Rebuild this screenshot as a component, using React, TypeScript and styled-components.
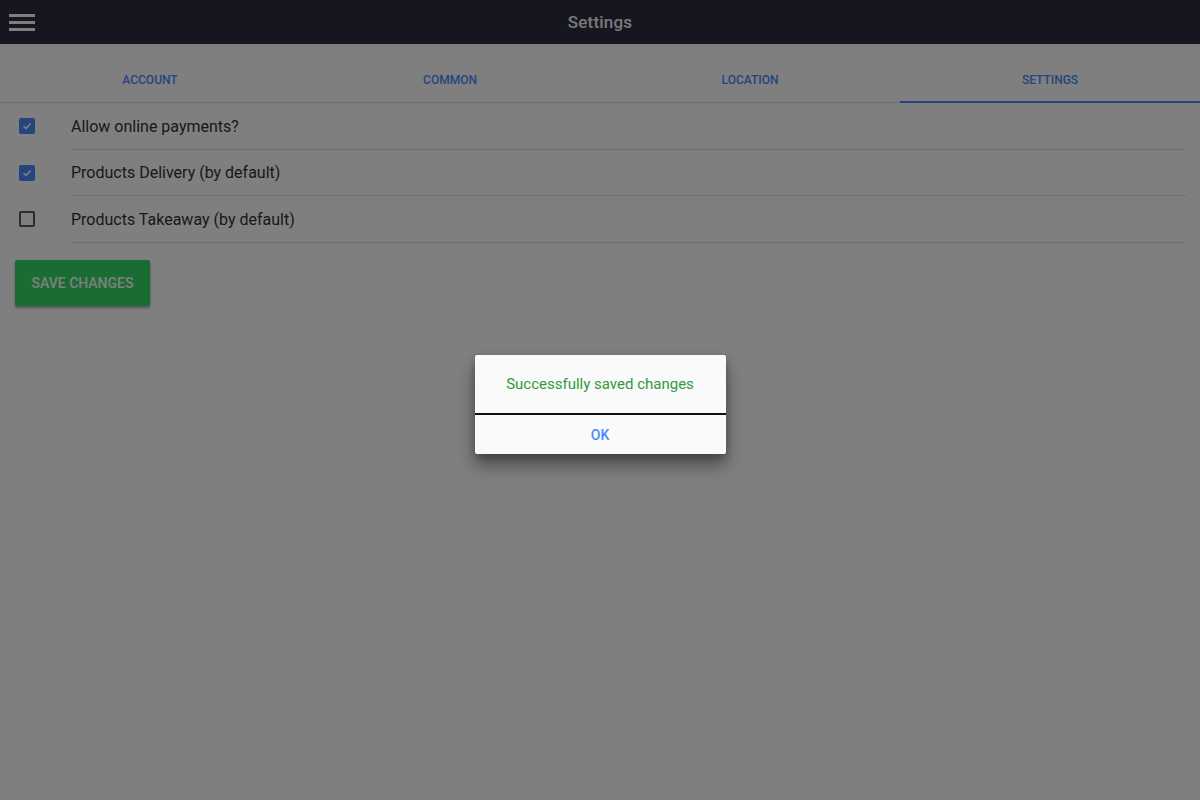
import React, { useState } from "react";
import styled, { createGlobalStyle } from "styled-components";

const Global = createGlobalStyle`
  html, body { margin: 0; padding: 0; width: 100%; height: 100%; }
  body { font-family: Roboto, "Noto Sans", "Liberation Sans", sans-serif; background: #ffffff; }
  #root { width: 100%; height: 100%; }
  * { box-sizing: border-box; }
`;

const Page = styled.div`
  position: relative;
  width: 1200px;
  height: 800px;
  overflow: hidden;
  background: #ffffff;
  display: flex;
  flex-direction: column;
`;

const Header = styled.header`
  height: 44px;
  background: #2a2c3e;
  display: grid;
  grid-template-columns: 60px 1fr 60px;
  align-items: center;
`;

const MenuButton = styled.button`
  border: 0;
  background: transparent;
  padding: 0 0 0 9px;
  height: 44px;
  display: flex;
  flex-direction: column;
  justify-content: center;
  gap: 4px;
  cursor: pointer;
`;

const MenuLine = styled.span`
  display: block;
  width: 26px;
  height: 3px;
  background: #ffffff;
`;

const Title = styled.h1`
  margin: 0;
  text-align: center;
  color: #f2f2f2;
  font-size: 17px;
  font-weight: 500;
  letter-spacing: 0.2px;
`;

const Tabs = styled.nav`
  display: grid;
  grid-template-columns: repeat(4, 1fr);
  height: 59px;
  border-bottom: 1px solid #dcdcdc;
`;

const Tab = styled.div<{ $active?: boolean }>`
  display: flex;
  align-items: flex-end;
  justify-content: center;
  padding-bottom: 14px;
  font-size: 12px;
  font-weight: 500;
  color: #488aff;
  text-transform: uppercase;
  border-bottom: 2px solid ${(p) => (p.$active ? "#488aff" : "transparent")};
  margin-bottom: -1px;
`;

const List = styled.div`
  display: flex;
  flex-direction: column;
`;

const Row = styled.label`
  display: grid;
  grid-template-columns: 71px 1fr;
  align-items: stretch;
  height: 46.5px;
  padding-right: 14px;
  cursor: pointer;
`;

const BoxCell = styled.div`
  display: flex;
  align-items: center;
  padding-left: 19px;
`;

const Box = styled.span<{ $checked: boolean }>`
  width: 16px;
  height: 16px;
  border-radius: 2px;
  border: 2px solid ${(p) => (p.$checked ? "#488aff" : "#5a5a5a")};
  background: ${(p) => (p.$checked ? "#488aff" : "transparent")};
  display: flex;
  align-items: center;
  justify-content: center;
`;

const RowText = styled.div`
  display: flex;
  align-items: center;
  border-bottom: 1px solid #dedede;
  font-size: 16px;
  color: #333333;
  padding-top: 1px;
`;

const SaveButton = styled.button`
  margin: 17px 0 0 15px;
  width: 135px;
  height: 46px;
  border: 0;
  border-radius: 2px;
  background: #32db64;
  color: #ffffff;
  font-family: Roboto, "Noto Sans", "Liberation Sans", sans-serif;
  font-size: 14px;
  font-weight: 500;
  text-transform: uppercase;
  box-shadow: 0 2px 3px rgba(0, 0, 0, 0.35);
  align-self: flex-start;
  cursor: pointer;
`;

const Backdrop = styled.div`
  position: absolute;
  inset: 0;
  background: rgba(0, 0, 0, 0.5);
  display: flex;
  align-items: flex-start;
  justify-content: center;
  padding-top: 355px;
`;

const Dialog = styled.div`
  width: 251px;
  background: #fafafa;
  border-radius: 2px;
  box-shadow: 0 12px 18px rgba(0, 0, 0, 0.35), 0 4px 8px rgba(0, 0, 0, 0.25);
  display: flex;
  flex-direction: column;
`;

const Message = styled.div`
  height: 60px;
  display: flex;
  align-items: center;
  justify-content: center;
  font-size: 15px;
  color: #2e9a3c;
  border-bottom: 2px solid #111111;
  padding-bottom: 1px;
`;

const OkButton = styled.button`
  height: 39px;
  border: 0;
  background: transparent;
  color: #488aff;
  font-family: Roboto, "Noto Sans", "Liberation Sans", sans-serif;
  font-size: 14px;
  font-weight: 500;
  cursor: pointer;
`;

const Check = () => (
  <svg width="10" height="10" viewBox="0 0 10 10">
    <path d="M1.5 5.2 L4 7.5 L8.6 2.6" fill="none" stroke="#ffffff" strokeWidth="1.6" />
  </svg>
);

const items = [
  { label: "Allow online payments?", checked: true },
  { label: "Products Delivery (by default)", checked: true },
  { label: "Products Takeaway (by default)", checked: false },
];

export default function App() {
  const [vals, setVals] = useState(items.map((i) => i.checked));
  return (
    <Page>
      <Global />
      <Header>
        <MenuButton aria-label="menu">
          <MenuLine />
          <MenuLine />
          <MenuLine />
        </MenuButton>
        <Title>Settings</Title>
        <span />
      </Header>
      <Tabs>
        <Tab>Account</Tab>
        <Tab>Common</Tab>
        <Tab>Location</Tab>
        <Tab $active>Settings</Tab>
      </Tabs>
      <List>
        {items.map((it, i) => (
          <Row
            key={it.label}
            onClick={() => setVals((v) => v.map((x, j) => (j === i ? !x : x)))}
          >
            <BoxCell>
              <Box $checked={vals[i]}>{vals[i] && <Check />}</Box>
            </BoxCell>
            <RowText>{it.label}</RowText>
          </Row>
        ))}
      </List>
      <SaveButton>Save changes</SaveButton>
      <Backdrop>
        <Dialog>
          <Message>Successfully saved changes</Message>
          <OkButton>OK</OkButton>
        </Dialog>
      </Backdrop>
    </Page>
  );
}
